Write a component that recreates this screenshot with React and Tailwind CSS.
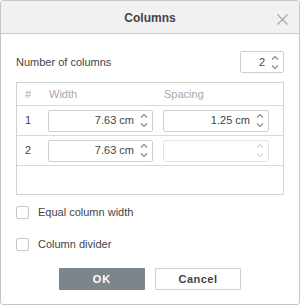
import React from 'react';

const font = { fontFamily: '"Liberation Sans", Arial, sans-serif' };

function Carets({ disabled = false }) {
  const color = disabled ? '#d4d4d4' : '#8a8a8a';
  return (
    <div className="flex w-[16px] flex-col items-center justify-center gap-[5px]">
      <svg width="8" height="5" viewBox="0 0 8 5" fill="none">
        <path d="M1 4.5 L4 1.5 L7 4.5" stroke={color} strokeWidth="1.1" />
      </svg>
      <svg width="8" height="5" viewBox="0 0 8 5" fill="none">
        <path d="M1 0.5 L4 3.5 L7 0.5" stroke={color} strokeWidth="1.1" />
      </svg>
    </div>
  );
}

function Spinner({ value, width, disabled = false }) {
  return (
    <div
      className={`flex h-[22px] items-center rounded-[2px] border ${
        disabled ? 'border-[#e4e4e4]' : 'border-[#cfcfcf]'
      } bg-white`}
      style={{ width }}
    >
      <div className="flex-1 pr-[2px] text-right text-[11px] text-[#444]">{value}</div>
      <Carets disabled={disabled} />
    </div>
  );
}

function Checkbox({ label }) {
  return (
    <div className="flex h-[13px] items-center gap-[9px]">
      <div className="h-[13px] w-[13px] rounded-[2px] border border-[#c8c8c8] bg-white" />
      <span className="text-[11px] text-[#444]">{label}</span>
    </div>
  );
}

function Row({ n, width, spacing, spacingDisabled = false }) {
  return (
    <div className="flex h-[30px] items-center border-b border-[#dadada]">
      <div className="w-[31px] pl-[8px] text-[11px] text-[#444]">{n}</div>
      <Spinner value={width} width={105} />
      <div className="ml-[10px]">
        <Spinner value={spacing} width={106} disabled={spacingDisabled} />
      </div>
    </div>
  );
}

export default function App() {
  return (
    <div className="h-[306px] w-[300px] bg-white" style={font}>
      <div className="flex h-[305px] w-[300px] flex-col overflow-hidden rounded-[3px] border border-[#c6c6c6] bg-white">
        <div className="relative flex h-[33px] shrink-0 items-center justify-center border-b border-[#cbcbcb] bg-[#f1f1f1] pt-[1px]">
          <span className="text-[12px] font-bold text-[#444]">Columns</span>
          <svg
            className="absolute right-[11px] top-[13px]"
            width="11"
            height="11"
            viewBox="0 0 11 11"
            fill="none"
          >
            <path d="M0.5 0.5 L10.5 10.5 M10.5 0.5 L0.5 10.5" stroke="#a3a3a3" strokeWidth="1.1" />
          </svg>
        </div>

        <div className="flex flex-col px-[15px]">
          <div className="mt-[17px] flex h-[22px] items-center justify-between">
            <span className="text-[11px] text-[#444]">Number of columns</span>
            <Spinner value="2" width={44} />
          </div>

          <div className="mt-[9px] flex h-[113px] flex-col border border-[#d2d2d2]">
            <div className="flex h-[23px] shrink-0 items-center border-b border-[#dadada] text-[11px] text-[#a8a8a8]">
              <div className="w-[31px] pl-[8px]">#</div>
              <div className="w-[105px] pl-[1px]">Width</div>
              <div className="ml-[10px] pl-[1px]">Spacing</div>
            </div>
            <Row n="1" width="7.63 cm" spacing="1.25 cm" />
            <Row n="2" width="7.63 cm" spacing="" spacingDisabled />
            <div className="flex-1" />
          </div>

          <div className="mt-[11px]">
            <Checkbox label="Equal column width" />
          </div>
          <div className="mt-[19px]">
            <Checkbox label="Column divider" />
          </div>

          <div className="mt-[17px] flex justify-center gap-[10px]">
            <button className="h-[22px] w-[86px] rounded-[1px] bg-[#7d858c] text-[11px] font-bold tracking-[1px] text-white">
              OK
            </button>
            <button className="h-[22px] w-[86px] rounded-[1px] border border-[#cfcfcf] bg-white text-[11px] font-bold tracking-[0.5px] text-[#444]">
              Cancel
            </button>
          </div>
        </div>
      </div>
    </div>
  );
}
